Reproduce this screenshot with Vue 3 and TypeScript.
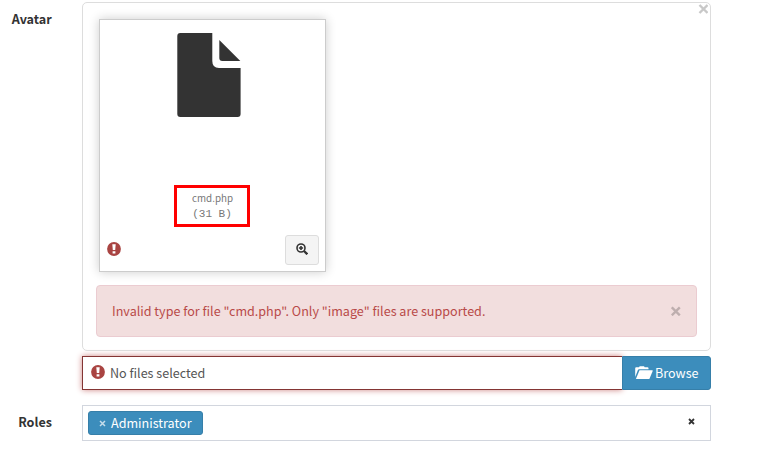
<script setup lang="ts">
import { ref } from 'vue'

interface PreviewFile {
  name: string
  size: string
}

const file = ref<PreviewFile>({ name: 'cmd.php', size: '(31 B)' })
const roles = ref<string[]>(['Administrator'])
const caption = ref('No files selected')
</script>

<template>
  <form class="form" @submit.prevent>
    <div class="row">
      <label class="label">Avatar</label>
      <div class="field">
        <section class="preview">
          <button type="button" class="close close-preview" aria-label="Close">
            <svg width="10" height="10" viewBox="0 0 10 10"><path d="M1.500 1 9.500 9M9.500 1 1.500 9" /></svg>
          </button>
          <div class="card">
            <svg class="file" width="64" height="84" viewBox="0 0 64 84">
              <path d="M3 0H35.300V28Q35.300 35 42 35H63.600V81Q63.600 84 60.600 84H3.300Q.3 84 .3 81V3Q.3 0 3.300 0Z" />
              <path d="M42.300 7 63.300 28H45.300Q42.300 28 42.300 25Z" />
            </svg>
            <div class="caption">
              <span class="name">{{ file.name }}</span>
              <samp class="size">{{ file.size }}</samp>
            </div>
            <div class="actions">
              <svg class="error" width="14" height="14" viewBox="0 0 14 14">
                <circle cx="7" cy="7" r="6.900" />
                <path d="M5.300 2.200H8.700L8.200 8H5.800ZM5.600 9.200H8.400V11.600H5.600Z" />
              </svg>
              <button type="button" class="zoom" aria-label="Zoom">
                <svg width="12" height="12" viewBox="0 0 12 12">
                  <circle cx="5" cy="5" r="4" />
                  <path class="handle" d="M8 8 11.300 11.300" />
                  <path class="plus" d="M5 2.900V7.100M2.900 5H7.100" />
                </svg>
              </button>
            </div>
          </div>
          <div class="alert">
            <span class="message">Invalid type for file "{{ file.name }}". Only "image" files are supported.</span>
            <button type="button" class="close" aria-label="Dismiss">
              <svg width="10" height="10" viewBox="0 0 10 10"><path d="M.8 1.300 8.800 9.300M8.800 1.300.8 9.300" /></svg>
            </button>
          </div>
        </section>
        <div class="picker">
          <div class="selected">
            <svg class="error" width="14" height="14" viewBox="0 0 14 14">
              <circle cx="7" cy="7" r="6.900" />
              <path d="M5.300 2.200H8.700L8.200 8H5.800ZM5.600 9.200H8.400V11.600H5.600Z" />
            </svg>
            <span>{{ caption }}</span>
          </div>
          <button type="button" class="browse">
            <svg width="18" height="14" viewBox="0 0 18 14">
              <path d="M.2 11V2.300Q.2 1.300 1.200 1.300H4L4.700.2H9L9.700 1.300H12.500Q13.500 1.300 13.500 2.300V3.300H4.100Q3.200 3.300 2.800 4.200Z" />
              <path d="M4.500 4.300H17.200Q18 4.300 17.700 5.100L14.600 12.400Q14.300 13 13.600 13H.9Z" />
            </svg>
            <span>Browse</span>
          </button>
        </div>
      </div>
    </div>
    <div class="row roles-row">
      <label class="label">Roles</label>
      <div class="field roles">
        <span v-for="role in roles" :key="role" class="tag">
          <svg width="7" height="7" viewBox="0 0 7 7"><path d="M1 1 6 6M6 1 1 6" /></svg>
          <span>{{ role }}</span>
        </span>
        <svg class="clear" width="7" height="7" viewBox="0 0 7 7"><path d="M1 1 6 6M6 1 1 6" /></svg>
      </div>
    </div>
  </form>
</template>

<style>
body {
  background: #fff;
  overflow: hidden;
}
</style>

<style scoped>
* {
  box-sizing: border-box;
}

.form {
  width: 711px;
  padding-top: 2px;
  color: #333;
  font-family: "Noto Sans CJK SC", "Noto Sans", sans-serif;
  font-size: 12.58px;
  line-height: 20px;
}

svg {
  display: block;
  flex: none;
}

button {
  margin: 0;
  font: inherit;
}

.row {
  display: flex;
}

.label {
  width: 82px;
  padding: 7px 30.3px 0 0;
  font-weight: 700;
  text-align: right;
}

.roles-row .label {
  padding-right: 30px;
}

.field {
  flex: 1;
  min-width: 0;
}

.preview {
  position: relative;
  height: 349px;
  padding: 16px 13px 13px;
  border: 1px solid #ddd;
  border-radius: 5px;
}

.close {
  display: block;
  padding: 0;
  border: 0;
  background: none;
}

.close path {
  fill: none;
  stroke: #000;
  stroke-width: 2.4;
}

.close svg {
  opacity: .21;
}

.close-preview {
  position: absolute;
  top: 1px;
  right: 2px;
}

.card {
  display: flex;
  flex-direction: column;
  align-items: center;
  width: 227px;
  height: 253px;
  margin-left: 3px;
  padding: 13px 6px 6px 7px;
  border: 1px solid #ccc;
  box-shadow: 0 0 10px rgba(0, 0, 0, .2);
}

.file {
  margin-right: 8px;
  fill: #333;
}

.caption {
  display: flex;
  flex-direction: column;
  align-items: center;
  width: 76px;
  height: 42px;
  margin: 68px 2px 0 0;
  padding-top: 3px;
  border: 3px solid #f00;
  color: #777;
  font-size: 9.8px;
  line-height: 15px;
}

.name {
  padding-left: 1px;
}

.size {
  padding-top: 1px;
  font-family: "Liberation Mono", monospace;
  font-size: 11px;
}

.actions {
  display: flex;
  align-items: center;
  justify-content: space-between;
  align-self: stretch;
  margin-top: 8px;
}

.actions .error {
  margin: -2px 0 0 -.5px;
}

.error circle {
  fill: #a94442;
}

.error path {
  fill: #fff;
}

.zoom {
  display: flex;
  align-items: center;
  justify-content: center;
  width: 34px;
  height: 30px;
  padding: 0 0 2px;
  border: 1px solid #ddd;
  border-radius: 3px;
  background: #f4f4f4;
}

.zoom svg {
  fill: none;
  stroke: #333;
  stroke-width: 1.6;
}

.zoom .handle {
  stroke-width: 2.3;
}

.alert {
  display: flex;
  align-items: center;
  justify-content: space-between;
  height: 52px;
  margin-top: 13px;
  padding: 0 15px;
  border: 1px solid #ebccd1;
  border-radius: 4px;
  background: #f2dede;
  color: #b94a48;
}

.picker {
  display: flex;
  height: 34px;
  margin-top: 5px;
}

.selected {
  display: flex;
  flex: 1;
  align-items: center;
  gap: 5px;
  padding-left: 8px;
  border: 1px solid #843534;
  border-right: 0;
  box-shadow: 0 0 6px #ce8483;
  color: #555;
}

.selected .error {
  margin-top: -3px;
}

.browse {
  position: relative;
  display: flex;
  align-items: center;
  gap: 2px;
  width: 89px;
  padding: 0 0 0 12px;
  border: 1px solid #367fa9;
  border-radius: 0 3px 3px 0;
  background: #3c8dbc;
  color: #fff;
}

.browse svg {
  fill: #fff;
}

.roles-row {
  margin-top: 15px;
}

.roles {
  display: flex;
  align-items: center;
  justify-content: space-between;
  height: 36px;
  padding: 0 15px 0 5px;
  border: 1px solid #d2d6de;
}

.tag {
  display: flex;
  align-items: center;
  gap: 5px;
  height: 24px;
  padding: 0 10px;
  border: 1px solid #367fa9;
  border-radius: 3px;
  background: #3c8dbc;
  color: #fff;
}

.tag svg {
  fill: none;
  stroke: rgba(255, 255, 255, .7);
  stroke-width: 1.5;
}

.clear {
  margin-top: -3px;
  fill: none;
  stroke: #333;
  stroke-width: 1.8;
}
</style>
